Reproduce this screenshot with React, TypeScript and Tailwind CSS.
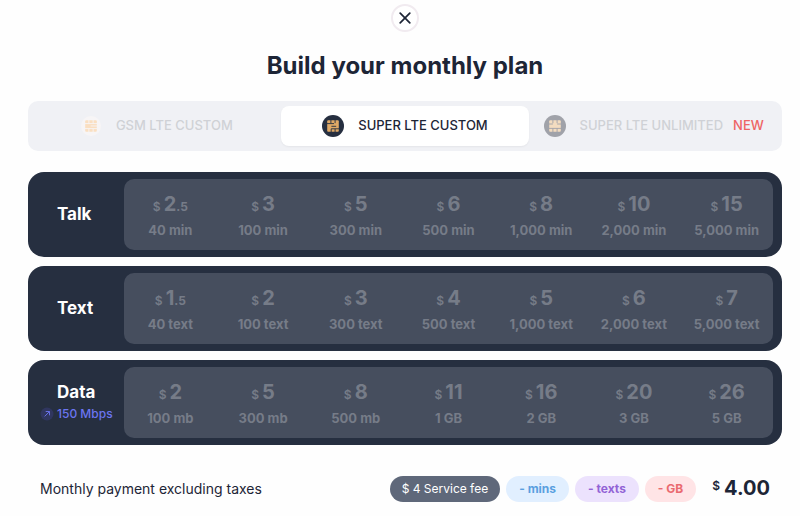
import { useState } from "react";

type Price = { main: string; sub?: string; amount: string };
type Row = { id: string; label: string; speed?: string; prices: Price[] };

const TABS = [
  { id: "gsm", label: "GSM LTE CUSTOM", isNew: false },
  { id: "super", label: "SUPER LTE CUSTOM", isNew: false },
  { id: "unlimited", label: "SUPER LTE UNLIMITED", isNew: true },
];

const ROWS: Row[] = [
  {
    id: "talk",
    label: "Talk",
    prices: [
      { main: "2", sub: ".5", amount: "40 min" },
      { main: "3", amount: "100 min" },
      { main: "5", amount: "300 min" },
      { main: "6", amount: "500 min" },
      { main: "8", amount: "1,000 min" },
      { main: "10", amount: "2,000 min" },
      { main: "15", amount: "5,000 min" },
    ],
  },
  {
    id: "text",
    label: "Text",
    prices: [
      { main: "1", sub: ".5", amount: "40 text" },
      { main: "2", amount: "100 text" },
      { main: "3", amount: "300 text" },
      { main: "4", amount: "500 text" },
      { main: "5", amount: "1,000 text" },
      { main: "6", amount: "2,000 text" },
      { main: "7", amount: "5,000 text" },
    ],
  },
  {
    id: "data",
    label: "Data",
    speed: "150 Mbps",
    prices: [
      { main: "2", amount: "100 mb" },
      { main: "5", amount: "300 mb" },
      { main: "8", amount: "500 mb" },
      { main: "11", amount: "1 GB" },
      { main: "16", amount: "2 GB" },
      { main: "20", amount: "3 GB" },
      { main: "26", amount: "5 GB" },
    ],
  },
];

const pillCls = "flex h-[26px] items-center rounded-full text-xs";

// disc colour, chip colour and the cuts between the contact pads
const SIM: Record<string, { disc: string; r: number; chip: string; cuts: string }> = {
  gsm: {
    disc: "#f7f5f6",
    r: 10,
    chip: "#fadfc1",
    cuts: "M8.9 5v3.4M13.1 5v3.4M5 8.6h12M10.6 11h6.4M5 13.6h12M8.9 13.6V17M13.1 13.6V17",
  },
  super: {
    disc: "#262f40",
    r: 11,
    chip: "#e0a966",
    cuts: "M8.9 5v3.2M13.1 5v3.2M5 8.6h7M9.4 11.3h4.8M9.2 13.8h7.8M9.2 13.8V17M13.1 13.8V17",
  },
  unlimited: {
    disc: "#a0a2a9",
    r: 11,
    chip: "#f3dcc0",
    cuts: "M8.9 5v3.2M13.1 5v3.2M5 9h3.9M13.1 9H17M5 13.4h12M8.9 13.4V17M13.1 13.4V17",
  },
};

function SimIcon({ id }: { id: string }) {
  const { disc, r, chip, cuts } = SIM[id];
  return (
    <svg className="size-[22px] shrink-0" viewBox="0 0 22 22" aria-hidden="true">
      <circle cx="11" cy="11" r={r} fill={disc} />
      <rect x="5.2" y="5.2" width="11.6" height="11.6" rx="1" fill={chip} />
      <path d={cuts} stroke={disc} strokeWidth="0.9" fill="none" />
    </svg>
  );
}

function PlanRow({ row }: { row: Row }) {
  const [selected, setSelected] = useState<number | null>(null);
  return (
    <section className="flex h-[85px] rounded-2xl bg-[#262f40] py-[7px] pr-[9px]">
      <div className="flex w-24 shrink-0 flex-col justify-center pb-[2px]">
        <h2 className="pl-[29px] text-[17px] leading-6 font-bold text-white">{row.label}</h2>
        {row.speed && (
          <a
            href="#speed"
            className="flex items-center gap-[3px] pl-3 text-xs leading-5 font-medium whitespace-nowrap text-[#6b75f0]"
          >
            <svg className="size-[14px] shrink-0" viewBox="0 0 14 14" aria-hidden="true">
              <circle cx="7" cy="7" r="6.5" fill="#30365f" />
              <path d="M4.6 9.4l4.8-4.8M5.7 4.5h3.8v3.8" stroke="#6b75f0" strokeWidth="0.9" fill="none" />
            </svg>
            {row.speed}
          </a>
        )}
      </div>
      <div className="grid flex-1 grid-cols-7 rounded-[10px] bg-[#464e5e] pt-[2px]">
        {row.prices.map((p, i) => (
          <button
            key={p.amount}
            type="button"
            aria-pressed={selected === i}
            onClick={() => setSelected(i)}
            className="flex flex-col items-center justify-center font-bold whitespace-nowrap text-[#767c88] aria-pressed:text-white"
          >
            <span className="flex items-baseline leading-7">
              <span className="mr-[3px] text-xs font-semibold">$</span>
              <span className="text-xl leading-7">{p.main}</span>
              {p.sub && <span className="text-xs">{p.sub}</span>}
            </span>
            <span className="text-[13px] leading-6">{p.amount}</span>
          </button>
        ))}
      </div>
    </section>
  );
}

export default function App() {
  const [tab, setTab] = useState("super");

  return (
    <main className="bg-[#fefefe] pt-1 pr-[18px] pb-[14px] pl-7 font-['Inter',sans-serif] text-[#1d2536]">
      <button
        type="button"
        aria-label="Close"
        className="mx-auto flex size-7 items-center justify-center rounded-full border-2 border-[#f1ebf0] bg-white"
      >
        <svg className="size-3" viewBox="0 0 12 12" aria-hidden="true">
          <path d="M1.2 1.2l9.6 9.6M10.8 1.2l-9.6 9.6" stroke="#1d2536" strokeWidth="1.7" strokeLinecap="round" />
        </svg>
      </button>

      <h1 className="mt-[18px] text-center text-2xl leading-8 font-bold">Build your monthly plan</h1>

      <div role="tablist" className="mt-[19px] grid grid-cols-3 rounded-[10px] bg-[#f0f1f5] px-1 py-[5px]">
        {TABS.map((t) => (
          <button
            key={t.id}
            type="button"
            role="tab"
            aria-selected={tab === t.id}
            onClick={() => setTab(t.id)}
            className="flex h-10 items-center justify-center rounded-lg text-[13px] font-medium whitespace-nowrap text-[#cfd1d6] aria-selected:bg-white aria-selected:text-[#1d2536] aria-selected:shadow-xs"
          >
            <SimIcon id={t.id} />
            <span className="ml-[14px]">{t.label}</span>
            {t.isNew && <span className="ml-[10px] text-[#ee6464]">NEW</span>}
          </button>
        ))}
      </div>

      <div className="mt-[21px] flex flex-col gap-[9px]">
        {ROWS.map((row) => (
          <PlanRow key={row.id} row={row} />
        ))}
      </div>

      <footer className="mt-[31px] flex items-center px-3 whitespace-nowrap">
        <p className="mr-auto text-sm">Monthly payment excluding taxes</p>
        <div className="flex gap-[6px]">
          <span className={`${pillCls} bg-[#5f687a] px-3 text-white`}>$ 4 Service fee</span>
          <span className={`${pillCls} bg-[#e1efff] px-[13px] font-bold text-[#5a9fdf]`}>- mins</span>
          <span className={`${pillCls} bg-[#ece2fd] px-[13px] font-bold text-[#9263d6]`}>- texts</span>
          <span className={`${pillCls} bg-[#ffe4e6] px-[13px] font-bold text-[#ea6a70]`}>- GB</span>
        </div>
        <p className="ml-4 flex items-start gap-1 pb-[2px]">
          <span className="text-xs leading-5 font-semibold">$</span>
          <span className="text-xl leading-6 font-bold">4.00</span>
        </p>
      </footer>
    </main>
  );
}
